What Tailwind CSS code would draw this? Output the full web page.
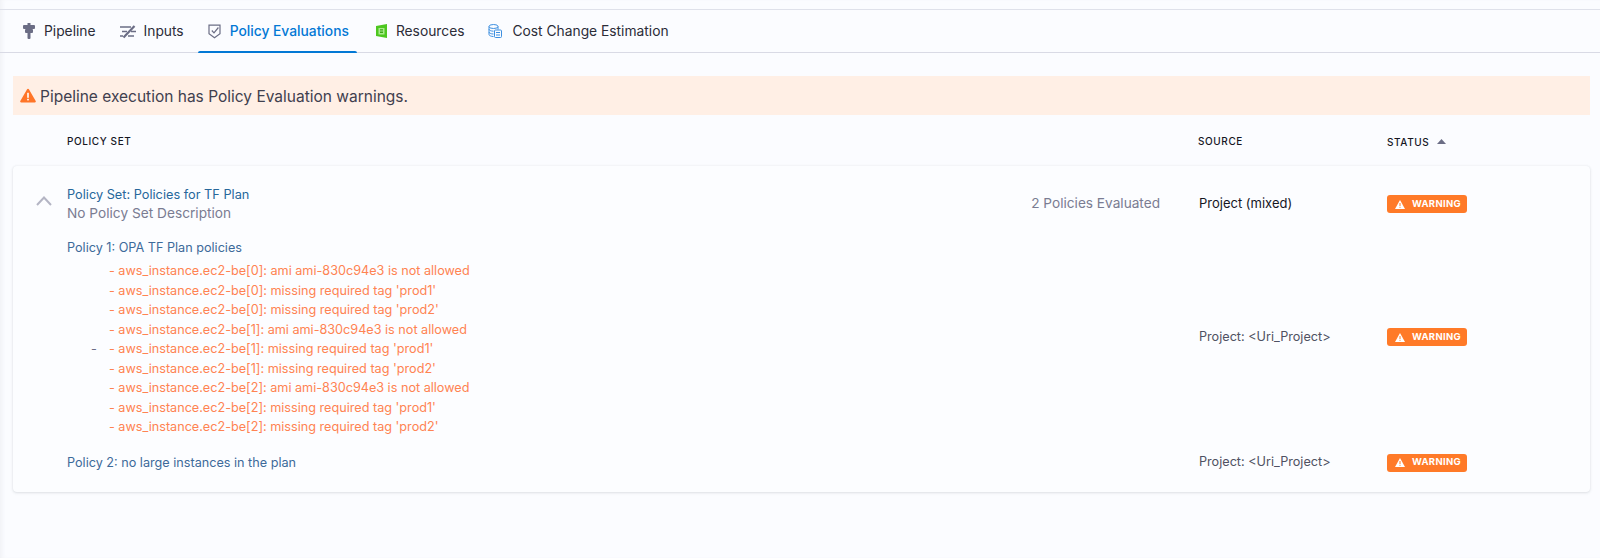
<!DOCTYPE html>
<html lang="en">
<head>
    <meta charset="utf-8"/>
    <title>Policy Evaluations</title>
    <script src="https://cdn.jsdelivr.net/npm/@tailwindcss/browser@4"></script>
</head>
<body class="bg-[#fbfcff] font-[Inter,sans-serif] text-[#2b2c38] h-[558px] overflow-hidden shadow-[inset_4px_0_4px_-2px_rgba(96,97,112,0.07)]">
    <div class="h-[10px] border-b border-[#dfe1ea]"></div>

    <!-- tabs -->
    <nav class="h-[43px] border-b border-[#d9dae5] flex items-stretch text-[13.800px] pl-[8px]">
        <a class="flex items-center gap-[8px] px-[14px]">
            <svg class="w-[14px] h-[16px]" viewBox="0 0 14 16" fill="#6b6d85"><rect x="1" y="2" width="12" height="4" rx="1"/><rect x="5.500" y="0" width="3" height="3"/><rect x="3" y="6" width="8" height="4" rx="1"/><rect x="5.500" y="9" width="3" height="7" rx="1"/></svg>
            Pipeline
        </a>
        <a class="flex items-center gap-[7px] pl-[9px] pr-[14px]">
            <svg class="w-[18px] h-[15px]" viewBox="0 0 18 15" fill="none" stroke="#6b6d85" stroke-width="1.500"><path d="M1 3h11M3 7.500h5M12 7.500h5M1 12h3M9 12h6"/><path d="M4.500 13.500 15.500 2" stroke-width="2.200"/></svg>
            Inputs
        </a>
        <a class="relative flex items-center gap-[9px] pl-[10px] pr-[8px] font-medium text-[#0278d5]">
            <svg class="w-[13px] h-[15px]" viewBox="0 0 13 15" fill="none" stroke="#6b6d85" stroke-width="1.200"><path d="M1 1.200h11v8.600l-5.500 4-5.500-4z"/><path d="M3.800 6.500l2.200 2.400 4.400-5.400"/></svg>
            Policy Evaluations
            <span class="absolute left-0 right-0 bottom-[-1px] h-[2px] bg-[#0278d5] rounded-t"></span>
        </a>
        <a class="flex items-center gap-[9px] pl-[19px] pr-[14px]">
            <svg class="w-[11px] h-[14px]" viewBox="0 0 11 14"><path d="M0 2 11 0v14L0 12z" fill="#4dc71f"/><path d="M2.500 4h6v6.500h-6z" fill="#a9ea8c"/><path d="M4 5.200h3v1.200H4zM4 7.500h3v1.500H4z" fill="#3aa814"/></svg>
            Resources
        </a>
        <a class="flex items-center gap-[10px] pl-[10px]">
            <svg class="w-[14px] h-[14px]" viewBox="0 0 14 14" fill="none" stroke="#3d8fe0" stroke-width="1"><ellipse cx="5.500" cy="2.500" rx="4.500" ry="2"/><path d="M1 2.500v8c0 1 2 2 4.500 2M10 2.500v3M1 5.200c0 1 2 2 4.500 2M1 8c0 1 2 2 4.500 2"/><rect x="6.500" y="6" width="7" height="7.500" rx="1"/><path d="M8 8.500h4M8 11h4"/></svg>
            Cost Change Estimation
        </a>
    </nav>

    <!-- warning banner -->
    <div class="mt-[23px] ml-[13px] mr-[10px] h-[39px] bg-[#ffefe5] flex items-center gap-[4px] pl-[7px] text-[15.500px] text-[#3f404e]">
        <svg class="w-[16px] h-[15px] shrink-0" viewBox="0 0 16 15"><path d="M8 .8a1 1 0 0 1 .9.500l6.800 11.700a1 1 0 0 1-.9 1.500H1.200a1 1 0 0 1-.9-1.500L7.100 1.300A1 1 0 0 1 8 .8z" fill="#ff7528"/><rect x="7.200" y="4.800" width="1.600" height="5" fill="#fff"/><rect x="7.200" y="10.800" width="1.600" height="1.600" fill="#fff"/></svg>
        <span class="pt-[2px]">Pipeline execution has Policy Evaluation warnings.</span>
    </div>

    <!-- table header -->
    <div class="mt-[15px] ml-[13px] mr-[10px] h-[36px] grid grid-cols-[1186px_188px_1fr] text-[10px] font-medium tracking-[0.6px] text-[#16161f]">
        <div class="pl-[54px] pt-[4px]">POLICY SET</div>
        <div class="pt-[4px] -ml-[1px]">SOURCE</div>
        <div class="pt-[5px] flex items-start gap-[8px]">
            STATUS
            <svg class="w-[9px] h-[5px] mt-[4px]" viewBox="0 0 9 5" fill="#6b6d85"><path d="M4.500 0 9 5H0z"/></svg>
        </div>
    </div>

    <!-- policy set card -->
    <div class="ml-[13px] mr-[10px] h-[326px] bg-[#fcfdff] rounded-[4px] shadow-[0_0_2px_rgba(96,97,112,0.1),0_1px_3px_rgba(96,97,112,0.16)] text-[12.650px]">
        <div class="grid grid-cols-[1186px_188px_1fr] h-[72px] pt-[19px]">
            <div class="flex">
                <div class="w-[54px] pl-[23px] pt-[11px]">
                    <svg class="w-[16px] h-[10px]" viewBox="0 0 16 10" fill="none" stroke="#b4b5c4" stroke-width="2"><path d="M1 9l7-7.500L15 9"/></svg>
                </div>
                <div class="leading-[19px]">
                    <div class="text-[12.750px] text-[#27679b]">Policy Set: Policies for TF Plan</div>
                    <div class="text-[13.700px] text-[#7a7c92]">No Policy Set Description</div>
                </div>
                <div class="ml-auto mr-[39px] pt-[9px] leading-[19px] text-[13.650px] text-[#7a7c92]">2 Policies Evaluated</div>
            </div>
            <div class="pt-[9px] leading-[19px] text-[13px] text-[#16161f]">Project (mixed)</div>
            <div class="pt-[10px]">
                <span class="inline-flex items-center gap-[7px] w-[80px] h-[18px] pl-[8px] rounded-[3px] bg-[#ff7a28] text-white text-[9.500px] font-bold tracking-[0.3px]">
                    <svg class="w-[10px] h-[9px]" viewBox="0 0 10 9"><path d="M5 0l5 9H0z" fill="#fff"/><rect x="4.500" y="3" width="1" height="3" fill="#ff7a28"/><rect x="4.500" y="6.800" width="1" height="1" fill="#ff7a28"/></svg>
                    WARNING
                </span>
            </div>
        </div>

        <div class="grid grid-cols-[1186px_188px_1fr] items-center">
            <div class="pl-[54px]">
                <div class="leading-[19px] text-[#3d6a9a]">Policy 1: OPA TF Plan policies</div>
                <div class="relative mt-[4px] pl-[42px] text-[#ff8352] leading-[19.500px]">
                    <span class="absolute left-[24px] top-[78px] text-[#6b6d85]">-</span>
                    <div>- aws_instance.ec2-be[0]: ami ami-830c94e3 is not allowed</div>
                    <div>- aws_instance.ec2-be[0]: missing required tag 'prod1'</div>
                    <div>- aws_instance.ec2-be[0]: missing required tag 'prod2'</div>
                    <div>- aws_instance.ec2-be[1]: ami ami-830c94e3 is not allowed</div>
                    <div>- aws_instance.ec2-be[1]: missing required tag 'prod1'</div>
                    <div>- aws_instance.ec2-be[1]: missing required tag 'prod2'</div>
                    <div>- aws_instance.ec2-be[2]: ami ami-830c94e3 is not allowed</div>
                    <div>- aws_instance.ec2-be[2]: missing required tag 'prod1'</div>
                    <div>- aws_instance.ec2-be[2]: missing required tag 'prod2'</div>
                </div>
            </div>
            <div class="text-[#4f5162]">Project: &lt;Uri_Project&gt;</div>
            <div class="pt-[1px]">
                <span class="inline-flex items-center gap-[7px] w-[80px] h-[18px] pl-[8px] rounded-[3px] bg-[#ff7a28] text-white text-[9.500px] font-bold tracking-[0.3px]">
                    <svg class="w-[10px] h-[9px]" viewBox="0 0 10 9"><path d="M5 0l5 9H0z" fill="#fff"/><rect x="4.500" y="3" width="1" height="3" fill="#ff7a28"/><rect x="4.500" y="6.800" width="1" height="1" fill="#ff7a28"/></svg>
                    WARNING
                </span>
            </div>
        </div>

        <div class="grid grid-cols-[1186px_188px_1fr] items-center mt-[16px]">
            <div class="pl-[54px] leading-[19px] text-[#3d6a9a]">Policy 2: no large instances in the plan</div>
            <div class="text-[#4f5162]">Project: &lt;Uri_Project&gt;</div>
            <div class="pt-[1px]">
                <span class="inline-flex items-center gap-[7px] w-[80px] h-[18px] pl-[8px] rounded-[3px] bg-[#ff7a28] text-white text-[9.500px] font-bold tracking-[0.3px]">
                    <svg class="w-[10px] h-[9px]" viewBox="0 0 10 9"><path d="M5 0l5 9H0z" fill="#fff"/><rect x="4.500" y="3" width="1" height="3" fill="#ff7a28"/><rect x="4.500" y="6.800" width="1" height="1" fill="#ff7a28"/></svg>
                    WARNING
                </span>
            </div>
        </div>
    </div>
</body>
</html>
